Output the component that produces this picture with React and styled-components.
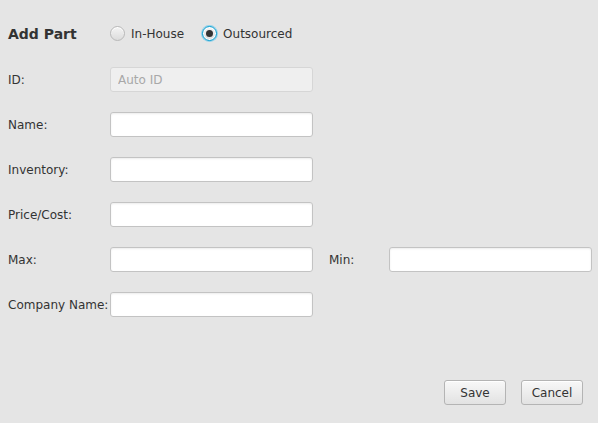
import React from "react";
import styled, { createGlobalStyle } from "styled-components";

const Global = createGlobalStyle`
  html, body { margin: 0; padding: 0; background: #e5e5e5; }
  * { box-sizing: border-box; }
`;

const Page = styled.div`
  width: 598px;
  height: 423px;
  background: #e5e5e5;
  font-family: "DejaVu Sans", Verdana, sans-serif;
  font-size: 12px;
  color: #333;
  display: flex;
  flex-direction: column;
  padding: 21px 15px 18px 8px;
`;

const Header = styled.div`
  display: flex;
  align-items: center;
  height: 25px;
`;

const Title = styled.h1`
  margin: 0;
  width: 102px;
  font-size: 14px;
  font-weight: bold;
  color: #333;
`;

const RadioLabel = styled.label`
  display: flex;
  align-items: center;
  gap: 6px;
  margin-right: 18px;
  cursor: default;
`;

const RadioCircle = styled.span`
  width: 15px;
  height: 15px;
  border-radius: 50%;
  display: inline-flex;
  align-items: center;
  justify-content: center;
  background: linear-gradient(#f4f4f4, #dcdcdc);
  border: 1px solid ${(p) => (p.$checked ? "#039ed3" : "#b8b8b8")};
  box-shadow: ${(p) => (p.$checked ? "0 0 0 1px #8fd1ea, inset 0 0 0 1px #fff" : "inset 0 1px 0 #fff")};
  &::after {
    content: "";
    display: ${(p) => (p.$checked ? "block" : "none")};
    width: 7px;
    height: 7px;
    border-radius: 50%;
    background: #333;
  }
`;

const Form = styled.div`
  margin-top: 21px;
  display: grid;
  grid-template-columns: 102px 203px 76px 203px;
  row-gap: 20px;
  align-items: center;
`;

const Label = styled.span`
  white-space: nowrap;
  margin-left: ${(p) => (p.$second ? "16px" : "0")};
`;

const Input = styled.input`
  height: 25px;
  width: 203px;
  margin: 0;
  border: 1px solid ${(p) => (p.disabled ? "#d6d6d6" : "#c3c3c3")};
  border-radius: 3px;
  background: ${(p) => (p.disabled ? "#efefef" : "#fff")};
  box-shadow: ${(p) => (p.disabled ? "none" : "inset 0 1px 2px rgba(0,0,0,0.08)")};
  font-family: inherit;
  font-size: 12px;
  color: #333;
  padding: 0 7px;
  &::placeholder { color: #a8a8a8; }
`;

const Footer = styled.div`
  margin-top: auto;
  display: flex;
  justify-content: flex-end;
  gap: 15px;
`;

const Button = styled.button`
  width: 62px;
  height: 25px;
  border: 1px solid #b4b4b4;
  border-radius: 3px;
  background: linear-gradient(#f8f8f8, #e2e2e2);
  box-shadow: inset 0 1px 0 #fff;
  font-family: inherit;
  font-size: 12px;
  color: #333;
  padding: 0;
`;

const Empty = styled.span``;

export default function App() {
  return (
    <Page>
      <Global />
      <Header>
        <Title>Add Part</Title>
        <RadioLabel>
          <RadioCircle />
          In-House
        </RadioLabel>
        <RadioLabel>
          <RadioCircle $checked />
          Outsourced
        </RadioLabel>
      </Header>
      <Form>
        <Label>ID:</Label>
        <Input disabled placeholder="Auto ID" />
        <Empty />
        <Empty />
        <Label>Name:</Label>
        <Input />
        <Empty />
        <Empty />
        <Label>Inventory:</Label>
        <Input />
        <Empty />
        <Empty />
        <Label>Price/Cost:</Label>
        <Input />
        <Empty />
        <Empty />
        <Label>Max:</Label>
        <Input />
        <Label $second>Min:</Label>
        <Input />
        <Label>Company Name:</Label>
        <Input />
        <Empty />
        <Empty />
      </Form>
      <Footer>
        <Button>Save</Button>
        <Button>Cancel</Button>
      </Footer>
    </Page>
  );
}
